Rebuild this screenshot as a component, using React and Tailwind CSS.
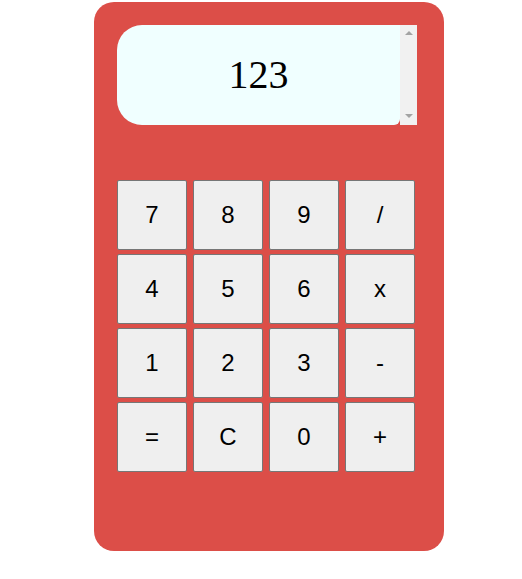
import { useState } from 'react'

const KEYS = ['7', '8', '9', '/', '4', '5', '6', 'x', '1', '2', '3', '-', '=', 'C', '0', '+']

export default function App() {
  const [valor] = useState('123')

  return (
    <div className="pt-[2px] pl-[94px] bg-white min-h-[579px]">
      <div className="w-[350px] h-[549px] bg-[#dc4e48] rounded-[20px] pt-[23px] pl-[23px]">
        <div className="flex w-[300px] h-[100px]">
          <div
            className="flex-1 bg-[#f0ffff] rounded-l-[25px] rounded-br-[6px] text-center text-[40px] leading-[46px] pt-[27px] text-black"
            style={{ fontFamily: '"Liberation Serif", "Times New Roman", serif' }}
          >
            {valor}
          </div>
          <div className="w-[17px] bg-[#f1f1f1] flex flex-col items-center justify-between pt-[6px] pb-[7px]">
            <svg width="8" height="5" viewBox="0 0 8 5">
              <polygon points="4,0 8,4 0,4" fill="#a3a3a3" />
            </svg>
            <svg width="8" height="5" viewBox="0 0 8 5">
              <polygon points="0,1 8,1 4,5" fill="#a3a3a3" />
            </svg>
          </div>
        </div>
        <div className="grid grid-cols-[repeat(4,70px)] gap-x-[6px] gap-y-[4px] mt-[55px]">
          {KEYS.map((k) => (
            <button
              key={k}
              type="button"
              className="w-[70px] h-[70px] bg-[#efefef] border border-[#767676] rounded-[2px] text-[24px] text-black"
              style={{ fontFamily: '"Liberation Sans", Arial, sans-serif' }}
            >
              {k}
            </button>
          ))}
        </div>
      </div>
    </div>
  )
}
